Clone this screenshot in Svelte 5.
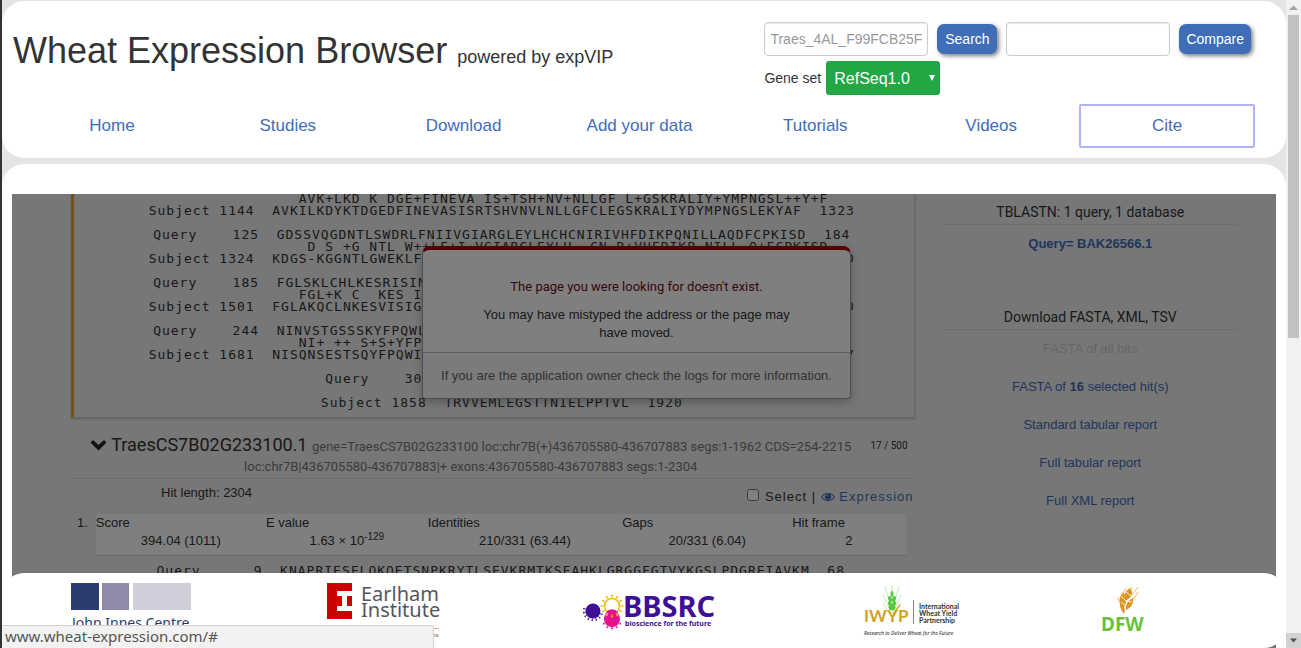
<script>
  const nav = ['Home', 'Studies', 'Download', 'Add your data', 'Tutorials', 'Videos', 'Cite'];

  const indent = ' '.repeat(14);
  const row = (label, from, seq, to) =>
    label + String(from).padStart(12 - label.length) + '  ' + seq + '  ' + to;

  const alignment = [
    indent + 'AVK+LKD K DGE+FINEVA IS+TSH+NV+NLLGF L+GSKRALIY+YMPNGSL++Y+F',
    row('Subject', 1144, 'AVKILKDYKTDGEDFINEVASISRTSHVNVLNLLGFCLEGSKRALIYDYMPNGSLEKYAF', 1323),
    '',
    row('Query', 125, 'GDSSVQGDNTLSWDRLFNIIVGIARGLEYLHCHCNIRIVHFDIKPQNILLAQDFCPKISD', 184),
    indent + ' D S +G NTL W++LF+I VGIARGLEYLH  CN R+VHFDIKP NILL Q+FCPKISD',
    row('Subject', 1324, 'KDGS-KGGNTLGWEKLFDIAVGIARGLEYLHRGCNTRVVHFDIKPHNILLDQEFCPKISD', 1500),
    '',
    row('Query', 185, 'FGLSKLCHLKESRISINDARGTIGYIAPEVFSRNFGVVSSKSDVYSYGMMVLEMVGARKN', 243),
    indent + 'FGL+K C  KES ISI  ARGTIGYIAPEVFSR FG VSSKSDVYSYGM+VLEMVGARKN',
    row('Subject', 1501, 'FGLAKQCLNKESVISIGGARGTIGYIAPEVFSRQFGAVSSKSDVYSYGMLVLEMVGARKN', 1680),
    '',
    row('Query', 244, 'NINVSTGSSSKYFPQWLYDNLDQFCCPTGEISSQTTDLVRKMVVVGLWCIQLVPTDRPSM', 303),
    indent + 'NI+ ++ S+S+YFPQWIYD+LD+FC    EI   TTDLVRKMV+VGLWCIQL+PTDRPSM',
    row('Subject', 1681, 'NISQNSESTSQYFPQWIYDHLDEFCSMGSEIGGDTTDLVRKMVIVGLWCIQLIPTDRPSM', 1857),
    '',
    row('Query', 304, 'REVVEMLESNTTDLQLPPKAL', 324),
    indent + 'R VVEMLE +TT+++LPP  L',
    row('Subject', 1858, 'TRVVEMLEGSTTNIELPPTVL', 1920)
  ];
  const nextLine = row('Query', 9, 'KNAPRIESFLQKQETSNPKRYTLSEVKRMTKSFAHKLGRGGFGTVYKGSLPDGREIAVKM', 68);

  const reports = ['Standard tabular report', 'Full tabular report', 'Full XML report'];
  const cogs = [0, 30, 60, 90, 120, 150, 180, 210, 240, 270, 300, 330];
  const halfCogs = [20, 45, 70, 95, 120, 145, 170, 195];
</script>

<div class="window">
  <div class="page">
    <header class="card">
      <div class="top">
        <h1>Wheat Expression Browser <small>powered by expVIP</small></h1>
        <form class="search" onsubmit={(e) => e.preventDefault()}>
          <div class="fields">
            <input type="text" aria-label="Gene" placeholder="Traes_4AL_F99FCB25F" />
            <button type="button">Search</button>
            <input type="text" aria-label="Genes to compare" />
            <button type="button">Compare</button>
          </div>
          <div class="set">
            <label for="geneset">Gene set</label>
            <span class="pick">
              <select id="geneset"><option>RefSeq1.0</option></select>
              <svg width="6" height="6" viewBox="0 0 6 6"><path d="M0 0H6L3 6Z" fill="#fff" /></svg>
            </span>
          </div>
        </form>
      </div>
      <nav>
        {#each nav as item}
          <a href="#top" class:current={item === 'Cite'}>{item}</a>
        {/each}
      </nav>
    </header>

    <main class="card">
      <div class="results">
        <section class="hits">
          <div class="hit-box">
            <pre>{alignment.join('\n')}</pre>
          </div>
          <div class="hit-head">
            <h3>
              <svg width="17" height="12" viewBox="0 0 17 12"><path d="M0.5 3.5L3 1L8.5 6L14 1L16.5 3.5L8.5 11.5Z" fill="#222" /></svg>
              TraesCS7B02G233100.1
              <small>gene=TraesCS7B02G233100 loc:chr7B(+)436705580-436707883 segs:1-1962 CDS=254-2215 loc:chr7B|436705580-436707883|+ exons:436705580-436707883 segs:1-2304</small>
            </h3>
            <span class="count">17 / 500</span>
          </div>
          <div class="hit-tools">
            <span>Hit length: 2304</span>
            <span class="actions">
              <label><input type="checkbox" /> Select</label> |
              <a href="#top"><svg width="14" height="10" viewBox="0 0 14 10"><path d="M0.5 5C3.5 0.3 10.5 0.3 13.5 5C10.5 9.7 3.5 9.7 0.5 5Z" fill="none" stroke="#3f6db8" stroke-width="1.2" /><circle cx="7" cy="4.6" r="3.2" fill="#3f6db8" /><path d="M5.2 4.5A1.9 1.9 0 0 1 7 2.7" fill="none" stroke="#eee" stroke-width="0.8" /></svg> Expression</a>
            </span>
          </div>
          <div class="hsp">
            <span>1.</span>
            <table>
              <thead>
                <tr><th>Score</th><th>E value</th><th>Identities</th><th>Gaps</th><th>Hit frame</th></tr>
              </thead>
              <tbody>
                <tr><td>394.04 (1011)</td><td>1.63 × 10<sup>-129</sup></td><td>210/331 (63.44)</td><td>20/331 (6.04)</td><td>2</td></tr>
              </tbody>
            </table>
          </div>
          <pre>{nextLine}</pre>
        </section>

        <aside>
          <h4>TBLASTN: 1 query, 1 database</h4>
          <a class="query" href="#top"><b>Query= BAK26566.1</b></a>
          <h4>Download FASTA, XML, TSV</h4>
          <a class="off" href="#top">FASTA of all hits</a>
          <a href="#top">FASTA of <b>16</b> selected hit(s)</a>
          {#each reports as report}
            <a href="#top">{report}</a>
          {/each}
        </aside>

        <div class="dialog-layer">
          <div class="dialog" role="alertdialog" aria-labelledby="missing">
            <div class="message">
              <h2 id="missing">The page you were looking for doesn't exist.</h2>
              <p>You may have mistyped the address or the page may have moved.</p>
            </div>
            <p class="owner">If you are the application owner check the logs for more information.</p>
          </div>
        </div>
        <div class="shade"></div>
      </div>
    </main>

    <footer>
      <svg width="126" height="60" viewBox="0 0 126 60" role="img" aria-label="John Innes Centre">
        <rect x="0" y="0" width="28" height="27" fill="#2d3c6e" />
        <rect x="31" y="0" width="27" height="27" fill="#9189aa" />
        <rect x="62" y="0" width="58" height="27" fill="#d1cedc" />
        <text x="1" y="45" class="jic">John Innes Centre</text>
      </svg>
      <svg width="124" height="60" viewBox="0 0 124 60" role="img" aria-label="Earlham Institute">
        <rect width="25" height="36" fill="#c00" />
        <path d="M10 8H25V13H20V23H25V28H10V23H15V13H10Z" fill="#fff" />
        <text x="34" y="18" class="earl">Earlham</text>
        <text x="34" y="34" class="earl">Institute</text>
        <rect x="0" y="45" width="112" height="1" fill="#e99" />
        <text x="105" y="54" class="tiny">ns</text>
      </svg>
      <svg width="144" height="60" viewBox="0 0 144 60" role="img" aria-label="BBSRC">
        <circle cx="10" cy="28" r="7.500" fill="#3f0f96" />
        {#each halfCogs as a}
          <g transform="rotate({a} 10 28)"><path d="M17 28H19" stroke="#3f0f96" stroke-width="0.8" /><circle cx="19.5" cy="28" r="0.8" fill="#3f0f96" /></g>
        {/each}
        <circle cx="29" cy="36" r="8" fill="#e6118c" />
        {#each [30, 60, 90, 120, 150] as a}
          <g transform="rotate({a} 29 36)"><path d="M36 36H38" stroke="#e6118c" stroke-width="0.8" /><circle cx="38.500" cy="36" r="0.9" fill="#e6118c" /></g>
        {/each}
        <circle cx="29" cy="23" r="7.500" fill="#fff" stroke="#f0bd1c" stroke-width="1.6" />
        <path d="M23 29A8 8 0 0 1 35 29A7.5 7.5 0 0 1 23 29Z" fill="#e6118c" />
        {#each cogs as a}
          <g transform="rotate({a} 29 23)"><path d="M37 23H39" stroke="#f0bd1c" stroke-width="0.9" /><circle cx="39.5" cy="23" r="1" fill="#f0bd1c" /></g>
        {/each}
        <text x="40" y="34" class="bbsrc">BBSRC</text>
        <text x="42" y="43" class="bio">bioscience for the future</text>
      </svg>
      <svg width="130" height="60" viewBox="-2 0 130 60" role="img" aria-label="International Wheat Yield Partnership">
        <g fill="none" stroke="#b5e8a8" stroke-width="0.9">
          <path d="M52 30V2M50 20L45 4M54 20L59 4M49 25L43 12M55 25L61 12M49 29L43 20M55 29L61 20" />
        </g>
        <g fill="#55c83c">
          <ellipse cx="52" cy="11" rx="1.500" ry="3" />
          <ellipse cx="50" cy="16" rx="1.800" ry="3" transform="rotate(-20 50 16)" /><ellipse cx="54" cy="16" rx="1.800" ry="3" transform="rotate(20 54 16)" />
          <ellipse cx="50" cy="21" rx="1.800" ry="3" transform="rotate(-20 50 21)" /><ellipse cx="54" cy="21" rx="1.800" ry="3" transform="rotate(20 54 21)" />
          <ellipse cx="50.500" cy="25" rx="1.800" ry="2.500" transform="rotate(-20 50.5 25)" /><ellipse cx="53.500" cy="25" rx="1.800" ry="2.500" transform="rotate(20 53.5 25)" />
        </g>
        <text x="24" y="39" class="iwyp">IWYP</text>
        <path d="M53 31L60 22" stroke="#d1a51b" stroke-width="1.4" />
        <path d="M73.500 17V41" stroke="#888" />
        <g class="name">
          <text x="79" y="26">International</text>
          <text x="79" y="33">Wheat Yield</text>
          <text x="79" y="40">Partnership</text>
        </g>
        <text x="24" y="52" class="motto">Research to Deliver Wheat for the Future</text>
      </svg>
      <svg width="60" height="60" viewBox="-2 0 60 60" role="img" aria-label="DFW">
        <g fill="#dc9622">
          <path d="M28 31C25 27 23 23 24 19C28 22 30 26 28 31Z" />
          <path d="M27 26C22 21 23 13 27 9C31 14 31 21 27 26Z" />
          <path d="M30 27C29 22 32 17 37 15C38 20 35 25 30 27Z" />
          <path d="M29 18C27 12 30 7 34 5C38 9 36 15 29 18Z" />
        </g>
        <path d="M34 7L36 4M36 12L42 4M37 17L42 9M26 12L30 5M24 20L22 14" stroke="#eeb860" />
        <path d="M25 13L30 18M25 19L30 23M30 9L35 13M31 18L36 19" stroke="#fff" stroke-width="0.8" />
        <text x="5" y="48" class="dfw">DFW</text>
      </svg>
    </footer>
    <div class="status">www.wheat-expression.com/#</div>
  </div>

  <div class="scrollbar">
    <svg width="15" height="15" viewBox="0 0 15 15"><path d="M3 10L7.500 5.500L12 10Z" fill="#a3a3a3" /></svg>
    <div class="track"><div class="thumb"></div></div>
    <svg class="down" width="15" height="15" viewBox="0 0 15 15"><path d="M4 5.500H11L7.500 9.500Z" fill="#505050" /></svg>
  </div>
</div>

<style>
  :global(body) { margin: 0; }
  .window {
    display: flex;
    height: 100vh;
    overflow: hidden;
    box-sizing: border-box;
    border-left: 2px solid #333;
    background: #e4e4e4;
    color: #333;
    font: 13px/18px "Liberation Sans", Arial, sans-serif;
  }
  .window *, .window *::before { box-sizing: border-box; }
  h1, h2, h3, h4, p, pre { margin: 0; font-weight: 400; }
  a { color: #3f6db8; text-decoration: none; }
  .page {
    position: relative;
    flex: 1;
    min-width: 0;
    display: flex;
    flex-direction: column;
    gap: 6px;
    padding-top: 1px;
  }
  .card { background: #fff; border-radius: 22px; }
  header { padding: 21px 31px 10px 22px; }
  .top { display: flex; justify-content: space-between; margin: 0 4px 9px -11px; }
  h1 { font-size: 36px; line-height: 40px; padding-top: 9px; }
  h1 small { font-size: 18px; }
  .fields { display: flex; align-items: center; gap: 9px; }
  .fields input {
    width: 164px;
    height: 34px;
    padding: 0 5px;
    border: 1px solid #ccc;
    border-radius: 4px;
    box-shadow: inset 0 1px 1px rgba(0, 0, 0, 0.08);
    font: 14px "Liberation Sans", Arial, sans-serif;
  }
  .fields input::placeholder { color: #999; }
  .fields button {
    height: 30px;
    min-width: 60px;
    padding: 0 7px;
    border: 0;
    border-radius: 7px;
    background: #3f6db8;
    box-shadow: 2px 2px 4px rgba(0, 0, 0, 0.5);
    color: #fff;
    font: 14px "Liberation Sans", Arial, sans-serif;
  }
  .set { display: flex; align-items: center; gap: 5px; margin-top: 5px; font-size: 14px; }
  .pick { position: relative; }
  .pick svg { position: absolute; right: 5px; top: 14px; }
  select {
    display: block;
    appearance: none;
    width: 114px;
    height: 34px;
    padding: 0 8px;
    border: 0;
    border-radius: 3px;
    background: #22a745;
    color: #fff;
    font: 16px "Liberation Sans", Arial, sans-serif;
  }
  nav { display: grid; grid-template-columns: repeat(7, 1fr); }
  nav a {
    padding: 11px 0;
    border: 2px solid transparent;
    border-radius: 2px;
    font-size: 17px;
    line-height: 18px;
    text-align: center;
  }
  nav a.current { border-color: #b0b5fb; }

  main { flex: 1; min-height: 0; display: flex; padding: 30px 10px 0; }
  main.card { border-radius: 22px 22px 0 0; }
  .results {
    position: relative;
    flex: 1;
    min-width: 0;
    overflow: hidden;
    display: grid;
    grid-template-columns: minmax(0, 23fr) minmax(0, 8fr);
    gap: 29px;
    padding: 0 39px 0 59px;
    background: #eee;
  }
  pre {
    padding-left: 16px;
    font: 13px/12px "DejaVu Sans Mono", monospace;
    letter-spacing: 1px;
    text-align: center;
  }
  .hits { margin-top: -1px; }
  .hit-box {
    padding-bottom: 8px;
    border: 1px solid #ccc;
    border-width: 0 1px 1px 3px;
    border-left-color: #e8a33a;
    box-shadow: 0 1px 2px rgba(0, 0, 0, 0.2);
  }
  .hit-head {
    display: flex;
    margin-top: 17px;
    padding: 0 7px 3px 0;
    border-bottom: 1px solid #ddd;
    font-family: Roboto, sans-serif;
    text-align: center;
  }
  h3 { flex: 1; font-size: 18px; line-height: 20px; }
  h3 small { color: #777; font-size: 13px; line-height: 14px; }
  .count { padding-top: 2px; font-size: 10px; }
  .hit-tools { display: flex; justify-content: space-between; padding: 5px 1px 8px 90px; }
  .actions { padding-top: 4px; letter-spacing: 1px; }
  .actions input { margin: 0 1px 0 0; width: 12px; height: 12px; }
  .actions svg { vertical-align: -1px; }
  .hsp { display: flex; justify-content: space-between; gap: 8px; padding: 0 9px 0 6px; }
  .hsp table {
    flex: 1;
    table-layout: fixed;
    border-collapse: collapse;
    background: #fff;
    border-bottom: 1px solid #ccc;
  }
  th, td { padding: 0; font-weight: 400; line-height: 18px; }
  th { text-align: left; }
  td { padding-bottom: 5px; text-align: center; }
  th:nth-child(1) { width: 21%; }
  th:nth-child(2) { width: 20%; }
  th:nth-child(3) { width: 24%; }
  th:nth-child(4) { width: 21%; }
  sup { font-size: 10px; line-height: 0; }
  .hsp + pre { margin-top: 9px; }

  aside { display: flex; flex-direction: column; text-align: center; }
  h4 {
    padding: 9px 0 3px;
    border-bottom: 1px solid #ddd;
    font: 14px/18px Roboto, sans-serif;
  }
  aside a { margin-top: 10px; margin-bottom: 10px; }
  aside .query { margin-bottom: 46px; }
  aside .off { color: #ccc; }

  .dialog-layer {
    position: absolute;
    inset: 0;
    display: flex;
    justify-content: center;
    align-items: flex-start;
    padding: 52px 15px 0 0;
  }
  .dialog {
    width: 429px;
    border: 1px solid #999;
    border-top: 4px solid #b00100;
    border-radius: 8px;
    border-bottom-left-radius: 4px;
    border-bottom-right-radius: 4px;
    background: #fff;
    box-shadow: 0 3px 8px rgba(50, 50, 50, 0.3);
    text-align: center;
  }
  .message { padding: 28px 48px 10px; }
  .message p { margin-top: 10px; }
  h2 { color: #730e15; font: 13px/18px Roboto, sans-serif; }
  .owner {
    padding: 14px 0 13px;
    border-top: 1px solid #bbb;
    border-radius: 0 0 4px 4px;
    background: #f7f7f7;
    color: #666;
  }
  .shade { position: absolute; inset: 0; background: rgba(0, 0, 0, 0.5); pointer-events: none; }

  footer {
    position: absolute;
    left: 0;
    right: 0;
    bottom: 0;
    display: grid;
    grid-template-columns: repeat(4, 4fr) 3fr;
    padding: 10px 0 5px 69px;
    border-radius: 22px;
    background: #fff;
  }
  footer svg { display: block; }
  .jic { font: 14px "Noto Sans", sans-serif; fill: #2d3c6e; }
  .earl { font: 20px "Noto Sans", sans-serif; fill: #55555f; }
  .tiny { font: 6px "Noto Sans", sans-serif; fill: #555; }
  .bbsrc { font: bold 29px "Noto Sans", sans-serif; fill: #3f0f96; }
  .bio { font: bold 7px "Noto Sans", sans-serif; fill: #3f0f96; }
  .iwyp { font: bold 17px Lato, sans-serif; fill: #d1a51b; }
  .name { font: bold 7px Lato, sans-serif; fill: #333; }
  .motto { font: italic 5px "Noto Sans", sans-serif; fill: #222; }
  .dfw { font: bold 19px "Noto Sans", sans-serif; fill: #6dc03c; }
  .status {
    position: absolute;
    left: 0;
    bottom: 0;
    width: 432px;
    padding: 1px 3px 2px;
    border: 1px solid #d0d0d0;
    border-width: 1px 1px 0 0;
    border-top-right-radius: 3px;
    background: #f2f2f2;
    color: #555;
    font: 15px/19px "Noto Sans", sans-serif;
  }
  .scrollbar { width: 15px; display: flex; flex-direction: column; background: #f1f1f1; }
  .scrollbar svg { display: block; }
  .scrollbar .down { background: #d2d2d2; }
  .track { flex: 1; padding: 0 2px; }
  .thumb { height: 52.3%; background: #c1c1c1; }
</style>
